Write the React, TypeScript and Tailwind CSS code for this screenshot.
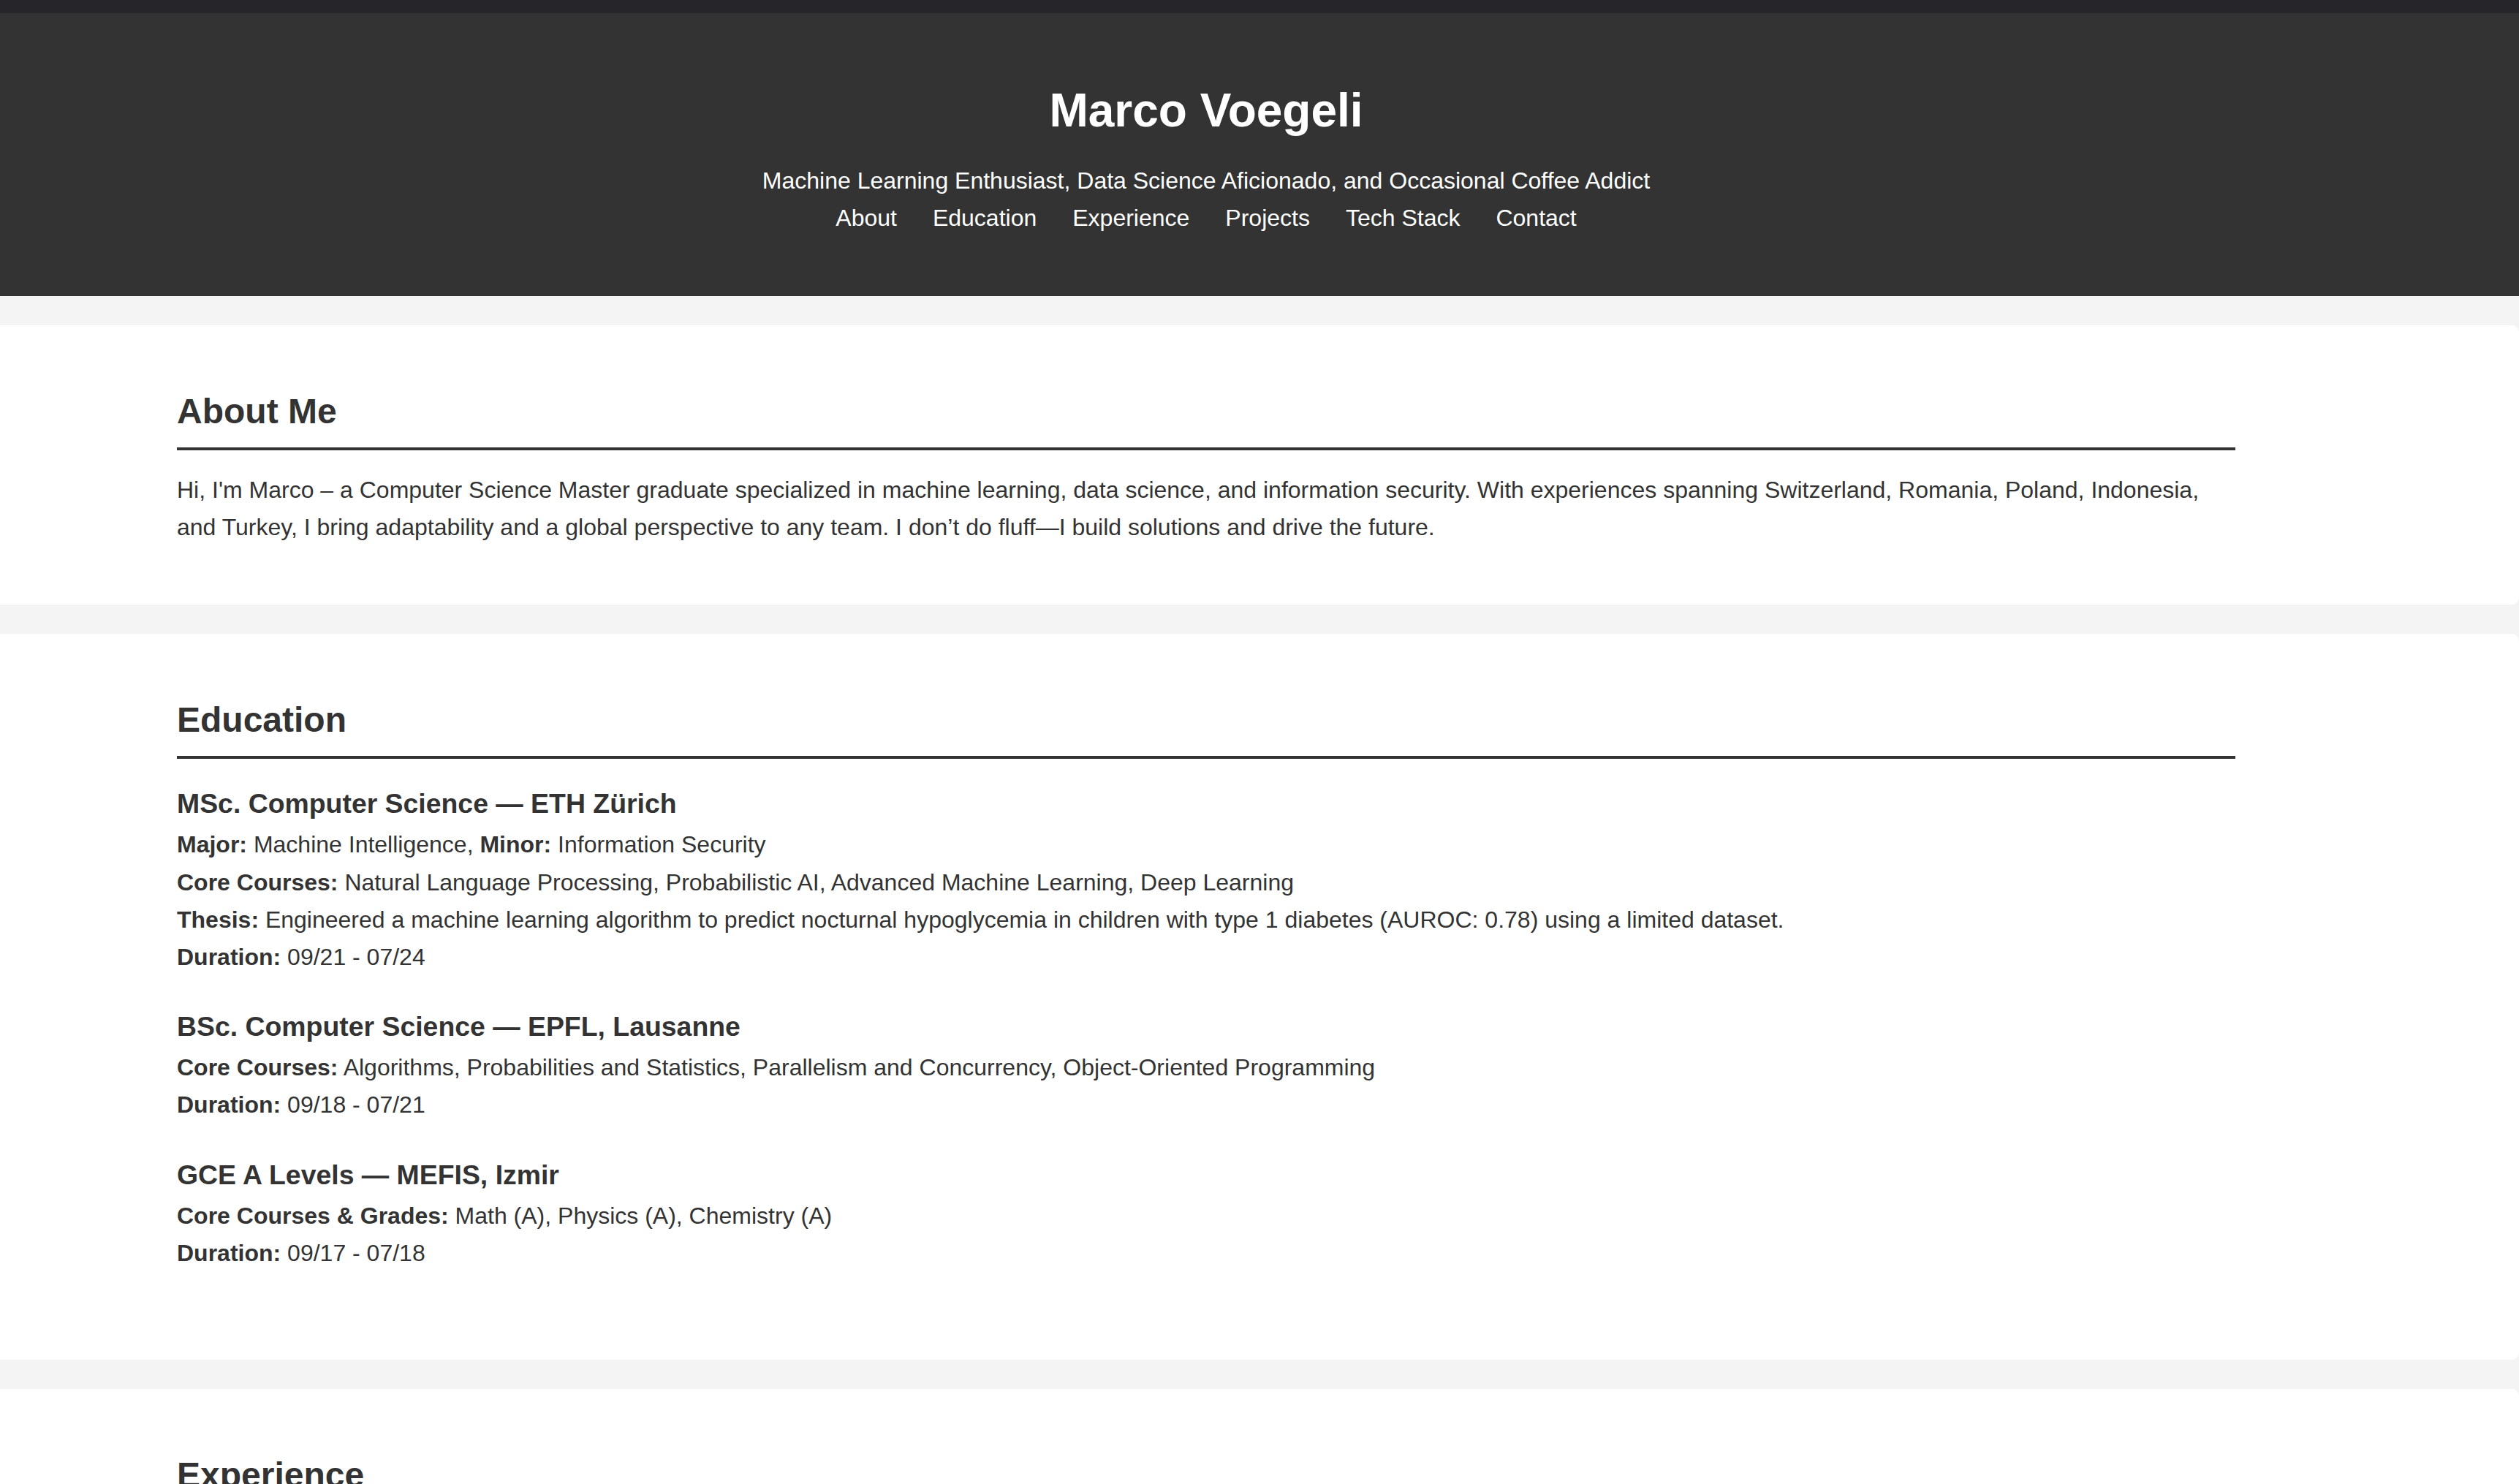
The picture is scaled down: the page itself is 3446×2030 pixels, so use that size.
import React from "react";

const font = { fontFamily: '"Liberation Sans", Arial, Helvetica, sans-serif' };

function Card({ title, children }: { title: string; children: React.ReactNode }) {
  return (
    <section className="bg-white rounded-r-[10px] pt-[90px] pb-[80px] pl-[242px]">
      <div className="w-[2816px]">
        <h2 className="text-[48px] leading-[55px] font-bold text-[#333] pb-[22px] border-b-4 border-[#333] mb-[29px]">
          {title}
        </h2>
        {children}
      </div>
    </section>
  );
}

function Item({ title, lines, last }: { title: string; lines: React.ReactNode[]; last?: boolean }) {
  return (
    <div className={last ? "pb-[40px]" : "pb-[48px]"}>
      <h3 className="text-[37.4px] leading-[43px] font-bold text-[#333] mb-[9px]">{title}</h3>
      {lines.map((l, i) => (
        <p key={i} className="text-[32px] leading-[51.2px] text-[#333]">
          {l}
        </p>
      ))}
    </div>
  );
}

export default function App() {
  const nav = ["About", "Education", "Experience", "Projects", "Tech Stack", "Contact"];
  return (
    <div style={font} className="bg-[#f4f4f4] min-h-[2400px] text-[#333]">
      <div className="h-[18px] bg-[#26262a]" />
      <header className="bg-[#333333] pt-[82px] pb-[81px]">
        <div className="w-[3300px] flex flex-col items-center text-white">
          <h1 className="text-[64px] leading-[102px] font-bold">Marco Voegeli</h1>
          <p className="mt-[20px] text-[32px] leading-[51px]">
            Machine Learning Enthusiast, Data Science Aficionado, and Occasional Coffee Addict
          </p>
          <nav className="flex gap-[49px] text-[32px] leading-[51px]">
            {nav.map((n) => (
              <a key={n} href={"#" + n.toLowerCase().replace(" ", "")} className="text-white no-underline">
                {n}
              </a>
            ))}
          </nav>
        </div>
      </header>

      <div className="flex flex-col gap-[40px] mt-[40px]">
        <Card title="About Me">
          <p className="text-[32px] leading-[51.2px] text-[#333]">
            Hi, I'm Marco – a Computer Science Master graduate specialized in machine learning, data science, and
            information security. With experiences spanning Switzerland, Romania, Poland, Indonesia, and Turkey, I
            bring adaptability and a global perspective to any team. I don’t do fluff—I build solutions and drive the
            future.
          </p>
        </Card>

        <Card title="Education">
          <div className="pt-[11px]">
            <Item
              title="MSc. Computer Science — ETH Zürich"
              lines={[
                <>
                  <b>Major:</b> Machine Intelligence, <b>Minor:</b> Information Security
                </>,
                <>
                  <b>Core Courses:</b> Natural Language Processing, Probabilistic AI, Advanced Machine Learning, Deep
                  Learning
                </>,
                <>
                  <b>Thesis:</b> Engineered a machine learning algorithm to predict nocturnal hypoglycemia in children
                  with type 1 diabetes (AUROC: 0.78) using a limited dataset.
                </>,
                <>
                  <b>Duration:</b> 09/21 - 07/24
                </>,
              ]}
            />
            <Item
              title="BSc. Computer Science — EPFL, Lausanne"
              lines={[
                <>
                  <b>Core Courses:</b> Algorithms, Probabilities and Statistics, Parallelism and Concurrency,
                  Object-Oriented Programming
                </>,
                <>
                  <b>Duration:</b> 09/18 - 07/21
                </>,
              ]}
            />
            <Item
              last
              title="GCE A Levels — MEFIS, Izmir"
              lines={[
                <>
                  <b>Core Courses &amp; Grades:</b> Math (A), Physics (A), Chemistry (A)
                </>,
                <>
                  <b>Duration:</b> 09/17 - 07/18
                </>,
              ]}
            />
          </div>
        </Card>

        <Card title="Experience">
          <Item
            title="Machine Learning Engineer"
            lines={[
              <>
                <b>Duration:</b> 08/24 - Present
              </>,
            ]}
          />
        </Card>
      </div>
    </div>
  );
}
